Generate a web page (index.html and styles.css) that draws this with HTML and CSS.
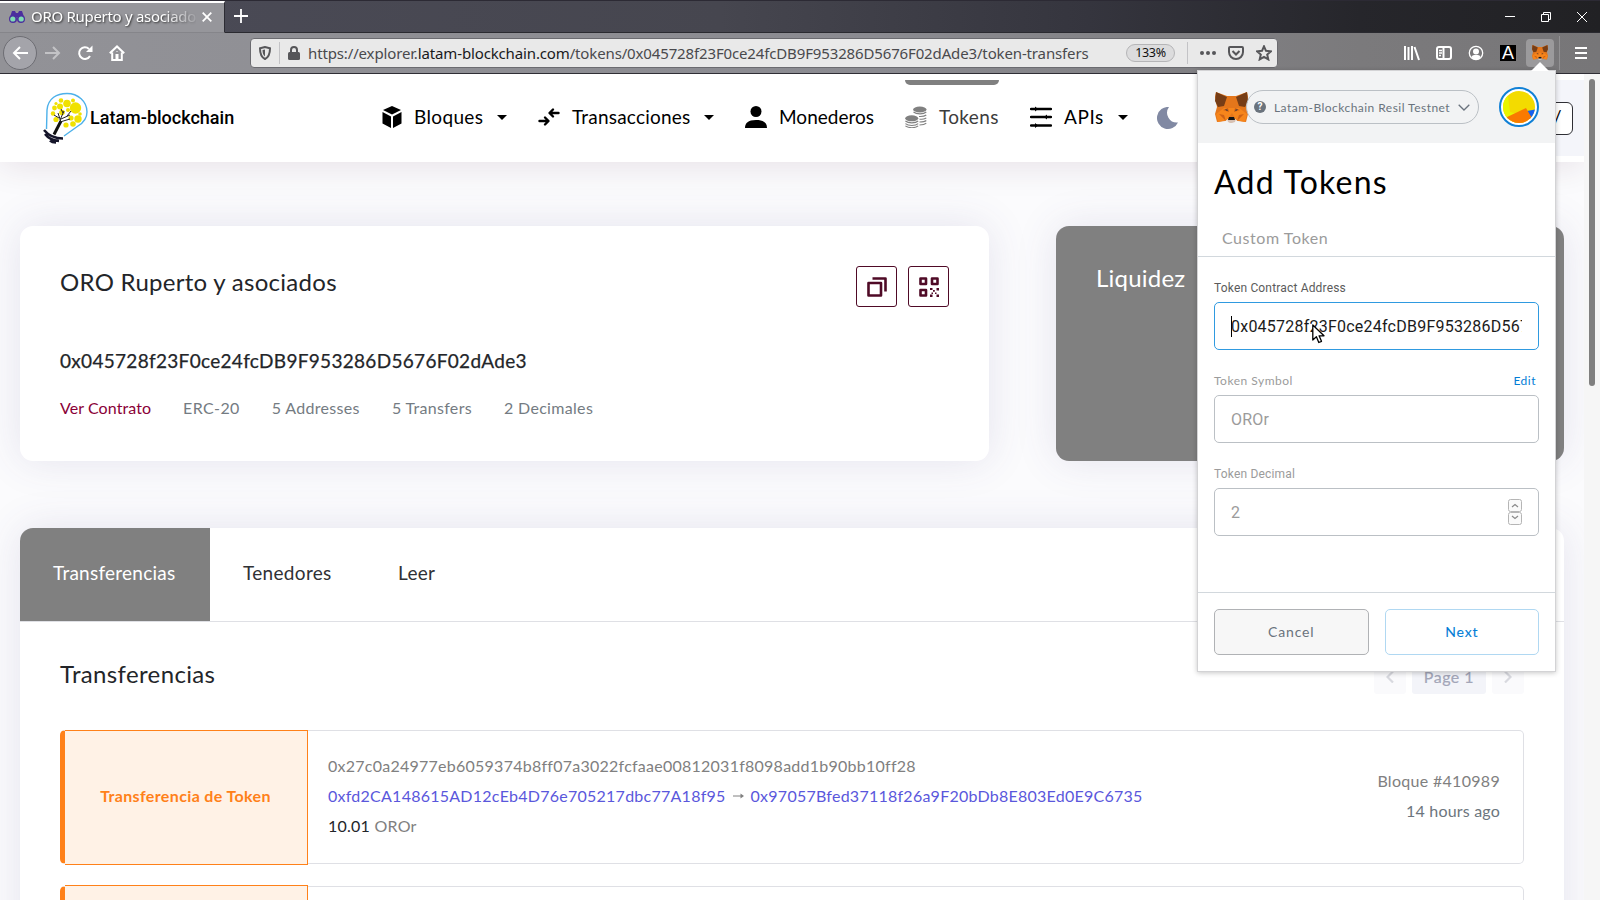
FILE: index.html
```
<!DOCTYPE html>
<html lang="es">
<head>
<meta charset="utf-8">
<title>ORO Ruperto y asociados</title>
<link rel="stylesheet" href="styles.css">
</head>
<body>
<svg width="0" height="0" class="defs" aria-hidden="true">
  <symbol id="fox" viewBox="0 0 33 31">
    <path fill="#e4761b" d="M12 4h9l11-4 1 5-2 10 2 7-2 8-8-1-3-2h-7l-3 2-8 1-2-8 2-7L0 5l1-5z"/>
    <path fill="#f6851b" d="M9 16h15l8 6-2 8-9-2-4-7-5 7-9 2-2-8z"/>
    <path fill="#763d16" d="M1 0l11 5-3 9-6 1-3-6zM32 0L21 5l3 9 6 1 3-6z"/>
    <path fill="#cd6116" d="M8 18l5-2 1 4zM25 18l-5-2-1 4zM4 22l5 1 2 6zM29 22l-5 1-2 6z"/>
    <path fill="#d7c1b3" d="M12 27h9l-1 3-3 1h-2l-2-1z"/>
    <path fill="#161616" d="M14 25h5l1 3h-7z"/>
    <path fill="#233447" d="M10 17l3 1-1 1zM23 17l-3 1 1 1z"/>
  </symbol>
</svg>

<header class="browser">
  <div class="tabstrip">
    <div class="tab">
      <svg class="favicon" viewBox="0 0 16 12"><path fill="#4b2e9e" d="M3 0h3l1 2h2l1-2h3l2 6H1z"/><circle cx="4" cy="8" r="4" fill="#4b2e9e"/><circle cx="12" cy="8" r="4" fill="#4b2e9e"/><circle cx="3.8" cy="8" r="2.6" fill="#7fdcb4"/><circle cx="12.2" cy="8" r="2.6" fill="#7fdcb4"/></svg>
      <span class="tab-title">ORO Ruperto y asociado</span>
      <svg class="tab-close" viewBox="0 0 10 10"><path d="M.7.7l8.6 8.6M9.3.7L.7 9.3"/></svg>
    </div>
    <svg class="new-tab" viewBox="0 0 14 14"><path d="M7 0v14M0 7h14"/></svg>
    <div class="window-buttons">
      <svg viewBox="0 0 10 10"><path d="M0 4.5h10"/></svg>
      <svg viewBox="0 0 10 10"><path d="M.5 2.5h7v7h-7zM2.5 2.500v-2h7v7h-2"/></svg>
      <svg viewBox="0 0 10 10"><path d="M0 0l10 10M10 0L0 10"/></svg>
    </div>
  </div>
  <div class="toolbar">
    <div class="back"><svg viewBox="0 0 16 14"><path d="M16 7H2M8 1L2 7l6 6"/></svg></div>
    <svg class="forward" viewBox="0 0 16 14"><path d="M0 7h14M8 1l6 6-6 6"/></svg>
    <svg class="reload" viewBox="0 0 16 16"><path class="line" d="M13 11A5.800 5.800 0 1 1 12 4"/><path class="solid" d="M15.500 .5v6.500h-6.500z"/></svg>
    <svg class="home" viewBox="0 0 16 16"><path class="line" d="M.8 8.300L8 1.500l7.200 6.800M3.200 7.500V15h9.600V7.500"/><path class="solid" d="M6.500 9h3v6h-3zM7.500 6h1v1h-1z"/></svg>
    <div class="urlbar">
      <svg class="shield" viewBox="0 0 12 14"><path class="line" d="M6 1L1 2.200C1 8 2 11 6 13c4-2 5-5 5-10.800z"/><path class="solid" d="M6 3.500v7C4 9 3.500 7 3.500 4z"/></svg>
      <i class="rule"></i>
      <svg class="lock" viewBox="0 0 12 14"><path class="line" d="M3 7V4a3 3 0 0 1 6 0v3"/><rect class="solid" y="6" width="12" height="8" rx="1.500"/></svg>
      <span class="url">https://explorer.<b>latam-blockchain.com</b>/tokens/0x045728f23F0ce24fcDB9F953286D5676F02dAde3/token-transfers</span>
      <span class="zoom">133%</span>
      <i class="rule rule-end"></i>
      <svg class="dots" viewBox="0 0 16 4"><circle cx="2" cy="2" r="2"/><circle cx="8" cy="2" r="2"/><circle cx="14" cy="2" r="2"/></svg>
      <svg class="pocket" viewBox="0 0 16 14"><path class="line" d="M2 1h12a1 1 0 0 1 1 1v4a7 7 0 0 1-14 0V2a1 1 0 0 1 1-1zM4.500 5L8 8.500 11.500 5"/></svg>
      <svg class="star" viewBox="0 0 16 16"><path class="line" d="M8 1.300l2 4.500 4.900.5-3.700 3.200 1.100 4.900L8 11.900l-4.300 2.500 1.100-4.900L1.100 6.300 6 5.800z"/></svg>
    </div>
    <div class="tools">
      <svg viewBox="0 0 16 16"><path class="line" d="M1 1v14M4.500 2v13M8 1v14M10.500 2l4.500 13"/></svg>
      <svg viewBox="0 0 16 16"><rect class="line" x="1" y="2" width="14" height="12" rx="2"/><path class="line" d="M7.500 2v12"/><path class="thin" d="M3 5.500h3M3 8h3M3 10.500h2"/></svg>
      <svg viewBox="0 0 16 16"><circle class="thin" cx="8" cy="8" r="6.700"/><circle class="solid" cx="8" cy="6.500" r="3"/><path class="solid" d="M3.500 12c1-2 2-2 4.500-2s3.500 0 4.500 2A5 5 0 0 1 3.500 12z"/></svg>
      <span class="ext-a">A</span>
      <span class="ext-fox"><svg><use href="#fox"/></svg></span>
      <i class="tool-rule"></i>
      <svg class="menu" viewBox="0 0 12 12"><path d="M0 1h12M0 6h12M0 11h12"/></svg>
    </div>
  </div>
</header>

<div class="viewport">
  <div class="page">
    <nav class="navbar">
      <div class="brand">
        <svg viewBox="0 0 46 52">
          <path fill="none" stroke="#4db1ea" stroke-width="1.400" d="M3.500 37L4 18C5 6 14 1.500 24 1.500c11 0 20 8 20 18.500 0 7-4 11-9 14L21 44"/>
          <g fill="#f0e100"><circle cx="32.500" cy="16" r="5.700"/><circle cx="24" cy="11.500" r="3.800"/><circle cx="18" cy="8.500" r="2.300"/><circle cx="30" cy="8.500" r="2"/><circle cx="17" cy="14.500" r="3"/><circle cx="11.500" cy="16" r="2.400"/><circle cx="10" cy="21.500" r="2.200"/><circle cx="13" cy="27.500" r="2.600"/><circle cx="35" cy="27" r="3.700"/><circle cx="30" cy="32" r="2.800"/><circle cx="23" cy="33" r="2.600"/><circle cx="19" cy="20.500" r="2.800"/><circle cx="28" cy="26" r="2.600"/><circle cx="37" cy="22" r="1.800"/><circle cx="13" cy="11.500" r="1.600"/><circle cx="25" cy="18" r="2"/></g>
          <path fill="none" stroke="#111" stroke-width="3" d="M11 42.500l7-13.500"/>
          <path fill="none" stroke="#222" stroke-width="1" d="M18 30l-3-9m1 5l-5-3m6 5l4-9m-3 8l9-4m-10 7l10-3m-7-6l-2-4m6 7l4-5"/>
          <path fill="none" stroke="#15152a" stroke-width="2.500" d="M1 38c4 5 10 8.500 19 8.500M2 42c3 4 8 6.500 14 7M7 48.500c2 2 4 2 6 2"/>
        </svg>
        <span>Latam-blockchain</span>
      </div>
      <div class="nav-items">
        <a class="nav-item bloques"><svg viewBox="0 0 22 22"><path d="M11 0l9 4-9 4.500L2 4zM1.500 6L10 10.500V22l-8.500-4.500zM20.500 6L12 10.500V22l8.500-4.500z"/></svg><span>Bloques</span><i class="caret"></i></a>
        <a class="nav-item trans"><svg viewBox="0 0 22 22"><path class="stroke" d="M1.500 15h8M7 11.500l3.500 3.500L7 18.500M20.500 7h-8M15 3.500L11.500 7l3.500 3.500"/></svg><span>Transacciones</span><i class="caret"></i></a>
        <a class="nav-item mon"><svg viewBox="0 0 22 22"><circle cx="11" cy="5.500" r="5.500"/><path d="M0 22c0-5 3-8 11-8s11 3 11 8z"/></svg><span>Monederos</span></a>
        <a class="nav-item tok active"><svg viewBox="0 0 22 22"><ellipse cx="14.800" cy="3.500" rx="6.700" ry="3"/><ellipse cx="6.700" cy="12.300" rx="6.500" ry="3"/><path class="fine" d="M8.500 6c3 2.500 10 2.500 12.800 0M14 10.500c3 .2 6-.5 7.300-1.500M14.500 13.300c3 0 5.500-.4 6.800-1.500M14.500 16c3 0 5.500-.4 6.800-1.500M14.500 19c3 0 5.500-.6 6.800-1.800M.4 15c3 2.500 10 2.500 12.800 0M.4 17.600c3 2.500 10 2.500 12.800 0M.4 19.800c3 2.500 10 2.500 12.800 0"/></svg><span>Tokens</span></a>
        <a class="nav-item api"><svg viewBox="0 0 22 22"><path class="stroke" d="M1 3h20M1 11h20M1 19.500h20"/><path d="M5 .5v5L8 3zM17 8.500v5l-3-2.500zM5 17v5l3-2.500z"/></svg><span>APIs</span><i class="caret"></i></a>
        <svg class="moon" viewBox="0 0 22 22"><path d="M12 0a9.800 9.800 0 0 0 9 15.500A11 11 0 1 1 12 0z"/></svg>
      </div>
      <div class="search"><div class="search-key">/</div></div>
    </nav>

    <main>
      <div class="summary">
        <section class="card token">
          <div class="token-head">
            <h1>ORO Ruperto y asociados</h1>
            <div class="token-buttons">
              <button><svg viewBox="0 0 20 20"><path class="heavy" d="M1.500 6h12.500v12.500H1.500zM5.500 1.500h13v13"/></svg></button>
              <button><svg viewBox="0 0 20 20"><path class="heavy" d="M1.500 1.500h5.500v5.500H1.500zM13 1.500h5.500v5.500H13zM1.500 13h5.500v5.500H1.500z"/><path d="M11 11h2.500v2H11zM17.500 11H20v2.500h-2.500zM14 13h1.800v1.800H14zM11 17.500h2.500V20H11zM12.500 15.500H14V17h-1.500zM17.500 17.500H20V20h-2.500zM16 15.500h1.500V17H16z"/></svg></button>
            </div>
          </div>
          <h2>0x045728f23F0ce24fcDB9F953286D5676F02dAde3</h2>
          <div class="meta"><a>Ver Contrato</a><span class="m-erc">ERC-20</span><span>5 Addresses</span><span>5 Transfers</span><span>2 Decimales</span></div>
        </section>
        <section class="card liquidity"><h2>Liquidez</h2></section>
      </div>

      <section class="card detail">
        <div class="tabs"><a class="on">Transferencias</a><a class="t2">Tenedores</a><a class="t3">Leer</a></div>
        <div class="detail-head">
          <h2>Transferencias</h2>
          <div class="pager">
            <span class="step"><svg viewBox="0 0 8 12"><path d="M7 .5L1.500 6 7 11.500"/></svg></span>
            <span class="current">Page 1</span>
            <span class="step"><svg viewBox="0 0 8 12"><path d="M1 .5L6.500 6 1 11.500"/></svg></span>
          </div>
        </div>
        <div class="transfer">
          <div class="kind">Transferencia de Token</div>
          <div class="body">
            <p class="hash">0x27c0a24977eb6059374b8ff07a3022fcfaae00812031f8098add1b90bb10ff28</p>
            <p class="route"><a>0xfd2CA148615AD12cEb4D76e705217dbc77A18f95</a><svg viewBox="0 0 11 6"><path d="M0 3h9"/><path class="tip" d="M7.500.5L11 3 7.500 5.500z"/></svg><a>0x97057Bfed37118f26a9F20bDb8E803Ed0E9C6735</a></p>
            <p><b>10.01</b> OROr</p>
          </div>
          <div class="when"><p>Bloque #410989</p><p class="ago">14 hours ago</p></div>
        </div>
        <div class="transfer next"><div class="kind"></div></div>
      </section>
    </main>
  </div>
  <div class="scrollbar"><i></i></div>
</div>

<aside class="wallet">
  <i class="pointer"></i>
  <div class="wallet-head">
    <svg class="fox"><use href="#fox"/></svg>
    <div class="network"><span class="q">?</span><span class="net-name">Latam-Blockchain Resil Testnet</span><svg viewBox="0 0 12 7"><path d="M.7.7L6 6 11.300.7"/></svg></div>
    <svg class="account" viewBox="0 0 40 40"><circle cx="20" cy="20" r="19" fill="#fff" stroke="#1080d6" stroke-width="2"/><clipPath id="disc"><circle cx="20" cy="20" r="16"/></clipPath><g clip-path="url(#disc)"><path fill="#f3db00" d="M0 0h40v40H0z"/><path fill="#e9f500" d="M0 10l9-1 2 16 18 5-20 10H0z"/><path fill="#1560f0" d="M28 24l10-2v12l-8-2z"/><path fill="#fa7a00" d="M6 31l21-10 7 12-8 8H10z"/></g></svg>
  </div>
  <h1>Add Tokens</h1>
  <div class="wallet-tab">Custom Token</div>
  <form>
    <label class="dark">Token Contract Address</label>
    <div class="field focus"><i class="text-caret"></i><span class="value">0x045728f23F0ce24fcDB9F953286D5676F02dAde3</span></div>
    <label class="geo">Token Symbol<a>Edit</a></label>
    <div class="field"><span class="value">OROr</span></div>
    <label>Token Decimal</label>
    <div class="field"><span class="value">2</span>
      <svg class="spin" viewBox="0 0 14 26"><path class="box" d="M2.500.5h9a2 2 0 0 1 2 2v8a2 2 0 0 1-2 2h-9a2 2 0 0 1-2-2v-8a2 2 0 0 1 2-2zM2.500 13.500h9a2 2 0 0 1 2 2v8a2 2 0 0 1-2 2h-9a2 2 0 0 1-2-2v-8a2 2 0 0 1 2-2z"/><path class="arr" d="M4 8l3-2.500L10 8M4 17l3 2.500L10 17"/></svg>
    </div>
  </form>
  <div class="wallet-foot"><button class="cancel">Cancel</button><button class="go">Next</button></div>
</aside>

<svg class="cursor" viewBox="0 0 13 20"><path fill="#fff" stroke="#000" stroke-width="1.300" stroke-linejoin="round" d="M.8 1v15l3.600-3.200 2.400 5.700 2.700-1.200-2.400-5.500H12z"/></svg>
</body>
</html>
```
FILE: styles.css
```
* { box-sizing: border-box; }
body { margin: 0; width: 1600px; height: 900px; overflow: hidden; display: flex; flex-direction: column; font: 16px/30px Lato, sans-serif; color: #808080; letter-spacing: .25px; background: #fbfbfd; }
h1, h2, p { margin: 0; font-weight: 400; }
svg { display: block; flex: none; }
i { display: block; flex: none; }
button { font: inherit; letter-spacing: inherit; padding: 0; }
.defs { position: absolute; }

/* browser chrome */
.browser { height: 74px; flex: none; font-family: "Noto Sans", sans-serif; border-bottom: 1px solid #2f2e35; background: linear-gradient(90deg, #929297, #8b8b91 55%, #7b7a7c 85%, #777678); }
.browser .line, .browser .thin { fill: none; stroke: currentColor; stroke-width: 2; }
.browser .thin { stroke-width: 1.3; }
.browser .solid { fill: currentColor; stroke: none; }
.tabstrip { height: 33px; display: flex; align-items: center; background: linear-gradient(90deg, #4b4b57, #46464f 45%, #35353e 68%, #26262b 85%, #212124); border-top: 1px solid #2c2a34; border-bottom: 1px solid #2a2a30; }
.tab { width: 225px; height: 32px; display: flex; align-items: center; padding: 0 12px 0 9px; background: #96969b; border-top: 2px solid #fff; border-right: 1px solid #2c2c33; border-bottom: 1px solid #85858a; }
.favicon { width: 16px; height: 12px; margin-right: 6px; }
.tab-title { width: 165px; height: 28px; line-height: 27px; white-space: nowrap; font-size: 15px; letter-spacing: -.3px; color: #fff; text-shadow: 1px 1px 2px #333; -webkit-mask-image: linear-gradient(90deg, #000 80%, rgba(0, 0, 0, .1)); mask-image: linear-gradient(90deg, #000 80%, rgba(0, 0, 0, .1)); }
.tab-close { width: 10px; height: 10px; margin-left: 6px; }
.tab-close path, .new-tab path { fill: none; stroke: #fff; stroke-width: 1.8; }
.new-tab { width: 14px; height: 14px; margin: 0 0 2px 9px; }
.window-buttons { display: flex; gap: 26px; margin: 0 13px 0 auto; }
.window-buttons svg { width: 10px; height: 10px; }
.window-buttons path { fill: none; stroke: #fff; stroke-width: 1; }
.toolbar { height: 40px; display: flex; align-items: center; color: #fff; padding-left: 3px; }
.back { width: 34px; height: 34px; border-radius: 50%; background: #a4a4aa; border: 1px solid #6d6d73; display: flex; align-items: center; justify-content: center; }
.back svg, .forward { width: 16px; height: 14px; fill: none; stroke: #fff; stroke-width: 2; }
.forward { margin-left: 8px; opacity: .45; }
.reload { width: 16px; height: 16px; margin-left: 16px; }
.home { width: 16px; height: 16px; margin-left: 16px; }
.urlbar { width: 1028px; height: 30px; margin-left: 125px; display: flex; align-items: center; border: 1px solid #6b6b70; border-radius: 4px; background: #e9e9e9; color: #565659; padding-left: 8px; }
.shield { width: 12px; height: 14px; }
.rule { width: 1px; height: 22px; background: #c3c3c6; margin: 0 8px; }
.lock { width: 12px; height: 14px; }
.url { width: 783px; margin-left: 8px; font-size: 15px; letter-spacing: -.14px; white-space: nowrap; color: #4a4a4d; }
.url b { font-weight: 400; color: #19191c; }
.zoom { width: 49px; height: 18px; margin-left: 35px; border: 1px solid #b5b5b7; border-radius: 9px; background: #dcdcdd; font-size: 12.500px; line-height: 16px; text-align: center; letter-spacing: -.3px; color: #111; }
.rule-end { margin: 0 12px; }
.dots { width: 16px; height: 4px; fill: currentColor; }
.pocket { width: 16px; height: 14px; margin-left: 12px; }
.star { width: 16px; height: 16px; margin-left: 12px; }
.tools { display: flex; align-items: center; margin-left: 126px; }
.tools > svg { width: 16px; height: 16px; margin-right: 16px; }
.ext-a { width: 16px; height: 16px; background: #000; color: #fff; font: 18px/17px "Liberation Sans", sans-serif; letter-spacing: 0; text-align: center; }
.ext-fox { width: 28px; height: 28px; margin-left: 10px; border-radius: 4px; background: #9b9a9c; padding: 6px; }
.ext-fox svg { width: 16px; height: 15px; }
.tool-rule { width: 1px; height: 34px; background: #929193; margin: 0 15px 0 5px; }
.tools .menu { width: 12px; height: 12px; margin: 0; fill: none; stroke: #fff; stroke-width: 2; }

/* page */
.viewport { flex: 1; min-height: 0; display: flex; overflow: hidden; }
.page { width: 1584px; display: flex; flex-direction: column; }
.scrollbar { width: 16px; padding: 5px 5px 0; background: #f6f6f6; }
.scrollbar i { width: 6px; height: 307px; border-radius: 3px; background: #808080; }
.navbar { height: 88px; flex: none; display: flex; align-items: center; background: #fff; padding-left: 43px; box-shadow: 0 4px 34px rgba(66, 10, 50, .11); color: #000; }
.brand { width: 338px; display: flex; align-items: center; gap: 1px; font: 500 18px/24px Roboto, sans-serif; letter-spacing: 0; }
.brand svg { width: 46px; height: 52px; }
.nav-items { height: 88px; display: grid; grid-template-columns: 157px 207px 160px 125px 127px 22px; align-items: center; }
.nav-item { height: 88px; display: flex; align-items: center; font-size: 19px; letter-spacing: .35px; padding-bottom: 2px; }
.nav-item svg, .moon { width: 22px; height: 22px; margin-right: 11px; }
.nav-item .stroke { fill: none; stroke: currentColor; stroke-width: 2.400; stroke-linecap: round; stroke-linejoin: round; }
.nav-item .fine { fill: none; stroke: currentColor; stroke-width: 1.100; }
.trans svg, .mon svg, .api svg { margin-right: 12px; }
.trans span { letter-spacing: .2px; }
.api span { letter-spacing: .6px; }
.mon span { letter-spacing: .01px; }
.tok svg { margin-right: 12px; }
.active svg { fill: #808080; color: #808080; }
.tok { position: relative; color: #3c3c3c; }
.tok::before { content: ""; position: absolute; left: 0; top: 6px; width: 94px; height: 5px; border-radius: 0 0 5px 5px; background: #808080; }
.caret { border: 5px solid transparent; border-top-color: currentColor; border-bottom: 0; margin-left: 14px; }
.moon { fill: #8189a3; margin: -1px 0 0; }
.search { flex: 1; height: 76px; margin-left: 20px; display: flex; align-items: center; background: #f4f5fa; padding-right: 11px; }
.search-key { width: 44px; height: 33px; margin-left: auto; border: 1px solid #2f2f35; border-radius: 6px; background: #fff; line-height: 27px; font-size: 19px; padding-left: 23px; }
main { padding: 64px 20px 0; }
.summary { display: flex; gap: 67px; }
.card { background: #fff; border-radius: 13px; box-shadow: 0 0 42px rgba(77, 68, 130, .13); }
.token { width: 969px; height: 235px; padding: 40px; color: #232529; }
.token-head { display: flex; justify-content: space-between; height: 41px; }
.token h1 { font-size: 24px; letter-spacing: .28px; line-height: 32px; }
.token-buttons { display: flex; gap: 11px; }
.token-buttons button { width: 41px; height: 41px; display: flex; align-items: center; justify-content: center; border: 1px solid #4f0a26; border-radius: 3px; background: #fff; }
.token-buttons svg { width: 20px; height: 20px; fill: #4f0a26; }
.heavy { fill: none; stroke: #4f0a26; stroke-width: 2.600; stroke-linejoin: round; }
.token h2 { margin-top: 39px; line-height: 30px; font-size: 19px; letter-spacing: .3px; -webkit-text-stroke: .25px currentColor; }
.meta { display: flex; margin-top: 17px; gap: 32px; color: #747b82; letter-spacing: .32px; }
.meta a { color: #8a0037; letter-spacing: .08px; width: 91px; white-space: nowrap; }
.m-erc { letter-spacing: .4px; }
.liquidity { width: 508px; height: 235px; padding: 35px 40px; background: #808080; color: #fff; }
.liquidity h2 { font-size: 24px; line-height: 34px; letter-spacing: .22px; }
.detail { margin-top: 67px; height: 600px; }
.tabs { height: 94px; display: flex; border-bottom: 1px solid #dfe0e5; font-size: 19px; line-height: 89px; color: #2f3135; letter-spacing: .32px; }
.tabs a { padding-left: 33px; width: 155px; }
.tabs .on { width: 190px; padding-left: 33px; letter-spacing: .25px; height: 93px; background: #808080; color: #fff; border-radius: 13px 0 0; }
.detail-head { height: 108px; padding: 38px 40px 0; display: flex; justify-content: space-between; }
.detail-head h2 { font-size: 24px; line-height: 28px; letter-spacing: .36px; color: #232529; }
.pager { display: flex; gap: 6px; height: 34px; color: #a3a6b8; }
.step { width: 32px; height: 34px; display: flex; align-items: center; justify-content: center; background: #fafafc; border-radius: 3px; }
.step svg { width: 8px; height: 12px; fill: none; stroke: #d8d9df; stroke-width: 2.200; }
.current { width: 74px; text-align: center; background: #f3f4f9; border-radius: 3px; line-height: 33px; letter-spacing: .5px; -webkit-text-stroke: .2px currentColor; }
.transfer { height: 134px; margin: 0 40px 22px; display: flex; align-items: center; border: 1px solid #dfe0e5; border-left: 5px solid #ff8119; border-radius: 5px; }
.kind { width: 243px; height: 135px; flex: none; display: flex; align-items: center; justify-content: center; align-self: flex-start; margin-top: -1px; border: 1px solid #ff8119; border-left: 0; background: #fff2e6; color: #ff8119; font-weight: 700; letter-spacing: .36px; padding: 0 1px 4px 0; }
.next .kind { margin-top: -2px; }
.body { padding: 0 0 2px 20px; }
.route { display: flex; align-items: center; color: #5a57dc; }
.route svg { width: 11px; height: 6px; margin: 0 7px; stroke: #808080; fill: none; }
.route .tip { fill: #808080; stroke: none; }
.body b { font-weight: 400; color: #232529; }
.when { margin-left: auto; padding: 0 23px 2px 0; text-align: right; letter-spacing: .3px; }
.ago { color: #6c757d; letter-spacing: .2px; }

/* wallet popup, floating over the page */
.wallet { position: absolute; left: 1197px; top: 70px; width: 359px; height: 602px; background: #fff; border: 1px solid #d3d3d5; box-shadow: 0 1px 5px rgba(0, 0, 0, .22); display: flex; flex-direction: column; }
.pointer { position: absolute; left: 333px; top: -9px; border: 9px solid transparent; border-top: 0; border-bottom-color: #fff; }
.wallet-head { height: 72px; flex: none; display: flex; align-items: center; background: #f2f3f4; padding-left: 17px; }
.fox { width: 33px; height: 31px; }
.network { width: 233px; height: 34px; margin-left: -2px; display: flex; align-items: center; border: 1px solid #bbc0c5; border-radius: 17px; padding-left: 7px; font-size: 12px; letter-spacing: .46px; color: #6a737d; white-space: nowrap; }
.q { width: 12px; height: 12px; border-radius: 50%; background: #6a737d; color: #fff; font: 700 10px/12px Roboto, sans-serif; letter-spacing: 0; text-align: center; }
.net-name { width: 184px; margin-left: 8px; padding-top: 1px; }
.network svg { width: 12px; height: 7px; fill: none; stroke: #6a737d; stroke-width: 1.300; }
.account { width: 40px; height: 40px; margin-left: 20px; }
.wallet h1 { margin: 19px 0 0 16px; font-size: 32px; line-height: 40px; letter-spacing: 1.25px; color: #000; }
.wallet-tab { height: 55px; padding: 21px 0 0 24px; line-height: 30px; letter-spacing: .56px; color: #9b9b9b; border-bottom: 1px solid #d2d8dd; }
form { padding: 17px 16px 0; font-family: Roboto, sans-serif; }
label { height: 28px; display: flex; justify-content: space-between; font-size: 12px; line-height: 28px; letter-spacing: .17px; color: #9b9b9b; padding-right: 3px; }
label.dark { color: #5b5b5b; }
label.geo { font-family: Lato, sans-serif; letter-spacing: .5px; line-height: 27px; }
label a { color: #037dd6; }
.field { height: 48px; margin-bottom: 17px; display: flex; align-items: center; border: 1px solid #bbc0c5; border-radius: 5px; padding: 0 16px; color: #9b9b9b; letter-spacing: .23px; }
.focus { border-color: #2f9ae0; color: #1b1b1b; }
.value { flex: 1; overflow: hidden; white-space: nowrap; padding-top: 2px; }
.text-caret { width: 1px; height: 21px; background: #000; margin-right: -1px; }
.spin { width: 14px; height: 26px; fill: none; }
.spin .box { stroke: #b5b5b5; fill: #fafafa; }
.spin .arr { stroke: #8a8a8a; stroke-width: 1.200; }
.wallet-foot { height: 79px; margin-top: auto; display: flex; gap: 16px; padding: 16px; border-top: 1px solid #d2d8dd; }
.wallet-foot button { flex: 1; height: 46px; font-size: 14px; border-radius: 5px; letter-spacing: .85px; }
.cancel { border: 1px solid #b0b2b5; background: #f7f7f7; color: #6a737d; }
.go { border: 1px solid #b0d8f2; background: #fff; color: #037dd6; -webkit-text-stroke: .1px currentColor; }
.cursor { position: absolute; left: 1312px; top: 324px; width: 13px; height: 20px; }
```
